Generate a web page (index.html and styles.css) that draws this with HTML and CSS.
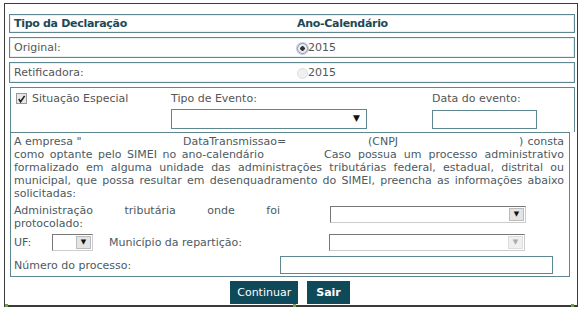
FILE: index.html
```html
<!DOCTYPE html>
<html lang="pt-BR">
<head>
  <meta charset="UTF-8">
  <title>Tipo da Declaração</title>
  <link rel="stylesheet" href="styles.css">
</head>
<body>
  <div class="frame">
    <div class="row row-head">
      <div class="col-a">Tipo da Declaração</div>
      <div class="col-b">Ano-Calendário</div>
    </div>
    <div class="row">
      <div class="col-a">Original:</div>
      <div class="col-b"><span class="radio checked"></span>2015</div>
    </div>
    <div class="row">
      <div class="col-a">Retificadora:</div>
      <div class="col-b"><span class="radio disabled"></span>2015</div>
    </div>

    <div class="special">
      <div class="special-check">
        <span class="checkbox">
          <svg width="10" height="10" viewBox="0 0 10 10"><path d="M2 5 L4 8 L8.5 1.5" fill="none" stroke="#222" stroke-width="1.8"/></svg>
        </span>
        Situação Especial
      </div>
      <div class="special-event">
        <div>Tipo de Evento:</div>
        <div class="select-plain"><span class="arrow">▼</span></div>
      </div>
      <div class="special-date">
        <div>Data do evento:</div>
        <div class="text-input date-input"></div>
      </div>
    </div>

    <div class="info">
      <p class="info-text"><span class="seg seg-1">A empresa "</span><span class="seg seg-2">DataTransmissao=</span><span class="seg seg-3">(CNPJ</span>) consta<br><span class="seg seg-4">como optante pelo SIMEI no ano-calendário</span>Caso possua um processo administrativo<br>formalizado em alguma unidade das administrações tributárias federal, estadual, distrital ou<br>municipal, que possa resultar em desenquadramento do SIMEI, preencha as informações abaixo<br>solicitadas:</p>

      <div class="form-row">
        <div class="label-admin">Administração tributária onde foi<br>protocolado:</div>
        <div class="select select-wide"><span class="drop">▼</span></div>
      </div>
      <div class="form-row form-row-uf">
        <div class="label-uf">UF:</div>
        <div class="select select-uf"><span class="drop">▼</span></div>
        <div class="label-mun">Município da repartição:</div>
        <div class="select select-wide disabled"><span class="drop">▼</span></div>
      </div>
      <div class="form-row form-row-num">
        <div class="label-num">Número do processo:</div>
        <div class="text-input num-input"></div>
      </div>
    </div>

    <div class="actions">
      <button type="button" class="btn">Continuar</button>
      <button type="button" class="btn btn-exit">Sair</button>
    </div>

    <span class="handle handle-left"></span>
    <span class="handle handle-mid"></span>
    <span class="handle handle-right"></span>
  </div>
</body>
</html>
```

FILE: styles.css
```css
body {
  margin: 0;
  background: #fff;
  font-family: "DejaVu Sans", Verdana, sans-serif;
  font-size: 11px;
  color: #555;
}

.frame {
  position: relative;
  box-sizing: border-box;
  margin: 3px 0 0 4px;
  width: 574px;
  height: 304px;
  border: 1px solid #3a3a3a;
  border-bottom: 2px solid #3a3a3a;
  padding: 10px 2px 0 4px;
}

/* declaration rows */
.row {
  box-sizing: border-box;
  display: flex;
  align-items: center;
  height: 21px;
  margin-bottom: 4px;
  border: 1px solid #5f8791;
  box-shadow: inset 0 0 0 1px #e9f0f2;
}

.row-head {
  height: 19px;
  margin-bottom: 4px;
  font-weight: bold;
  letter-spacing: -0.3px;
  color: #1d4956;
}

.col-a {
  width: 283px;
  padding-left: 4px;
}

.col-b {
  display: flex;
  align-items: center;
}

.radio {
  display: inline-block;
  width: 9px;
  height: 9px;
  margin-top: 1px;
  border-radius: 50%;
  border: 1px solid #b9c3cc;
  background: #f1f3f5;
}

.radio.checked {
  border-color: #8a98a8;
  background: radial-gradient(circle, #333 0 2px, #e8ecf0 2.5px);
  box-shadow: 0 0 0 1px #b8c6e6;
}

.radio.disabled {
  border-color: #dcdfe2;
  background: #eef0f2;
}

/* situação especial */
.special {
  box-sizing: border-box;
  display: flex;
  height: 45px;
  margin-left: 1px;
  border: 1px solid #5f8791;
  border-bottom: none;
  padding: 4px 0 0 5px;
}

.special-check {
  display: flex;
  align-items: flex-start;
  gap: 5px;
  width: 155px;
}

.checkbox {
  display: inline-flex;
  align-items: center;
  justify-content: center;
  width: 9px;
  height: 9px;
  margin-top: 1px;
  border: 1px solid #999;
  background: #e8e8e8;
}

.special-event {
  width: 261px;
}

.select-plain {
  position: relative;
  box-sizing: border-box;
  width: 196px;
  height: 20px;
  margin-top: 4px;
  border: 1px solid #5f8791;
}

.select-plain .arrow {
  position: absolute;
  right: 6px;
  top: 3px;
  font-size: 9px;
  color: #111;
}

.text-input {
  box-sizing: border-box;
  height: 19px;
  border: 1px solid #5f8791;
  background: #fff;
}

.date-input {
  width: 105px;
  margin-top: 5px;
}

/* info box */
.info {
  box-sizing: border-box;
  width: 560px;
  height: 145px;
  margin-left: 1px;
  border: 1px solid #5f8791;
  padding: 2px 5px 0 3px;
  color: #4b5a62;
}

.info-text {
  margin: 0;
  line-height: 13px;
  text-align: justify;
  text-align-last: justify;
}

.seg {
  display: inline-block;
  white-space: nowrap;
  text-align: left;
  text-align-last: left;
}

.seg-1 { width: 169px; }
.seg-2 { width: 185px; }
.seg-3 { width: 151px; }
.seg-4 {
  width: 310px;
  word-spacing: 2px;
}

.form-row {
  display: flex;
  align-items: flex-start;
  margin-top: 4px;
}

.label-admin {
  width: 266px;
  line-height: 13px;
  text-align: justify;
  text-align-last: justify;
}

.select {
  position: relative;
  box-sizing: border-box;
  height: 17px;
  border: 1px solid #777;
  border-right-color: #ccc;
  border-bottom-color: #ccc;
  background: #fff;
}

.select .drop {
  position: absolute;
  right: 1px;
  top: 1px;
  width: 15px;
  height: 13px;
  box-sizing: border-box;
  border: 1px solid #bbb;
  background: #e4e4e4;
  font-size: 7px;
  line-height: 11px;
  text-align: center;
  color: #111;
}

.select.disabled .drop {
  color: #aaa;
  background: #efefef;
  border-color: #ddd;
}

.select-wide {
  width: 196px;
  margin-left: 50px;
  margin-top: 2px;
}

.form-row-uf {
  align-items: center;
  margin-top: 4px;
}

.label-uf {
  width: 38px;
}

.select-uf {
  width: 41px;
}

.label-mun {
  width: 220px;
  margin-left: 16px;
}

.form-row-uf .select-wide {
  margin: 0;
}

.form-row-num {
  align-items: center;
  margin-top: 5px;
}

.label-num {
  width: 266px;
}

.num-input {
  width: 273px;
  height: 18px;
}

/* buttons */
.actions {
  display: flex;
  justify-content: center;
  gap: 9px;
  margin-top: 4px;
  padding-right: 4px;
}

.btn {
  height: 23px;
  padding: 0 7px;
  border: none;
  background: #0f4a5b;
  color: #fff;
  font-family: "DejaVu Sans", Verdana, sans-serif;
  font-size: 11px;
}

.btn-exit {
  padding: 0 9px;
  font-weight: bold;
}

.handle {
  position: absolute;
  bottom: -2px;
  width: 3px;
  height: 3px;
  background: #6aa63a;
}

.handle-left { left: 0; }
.handle-mid { left: 288px; }
.handle-right { left: 566px; }
```
